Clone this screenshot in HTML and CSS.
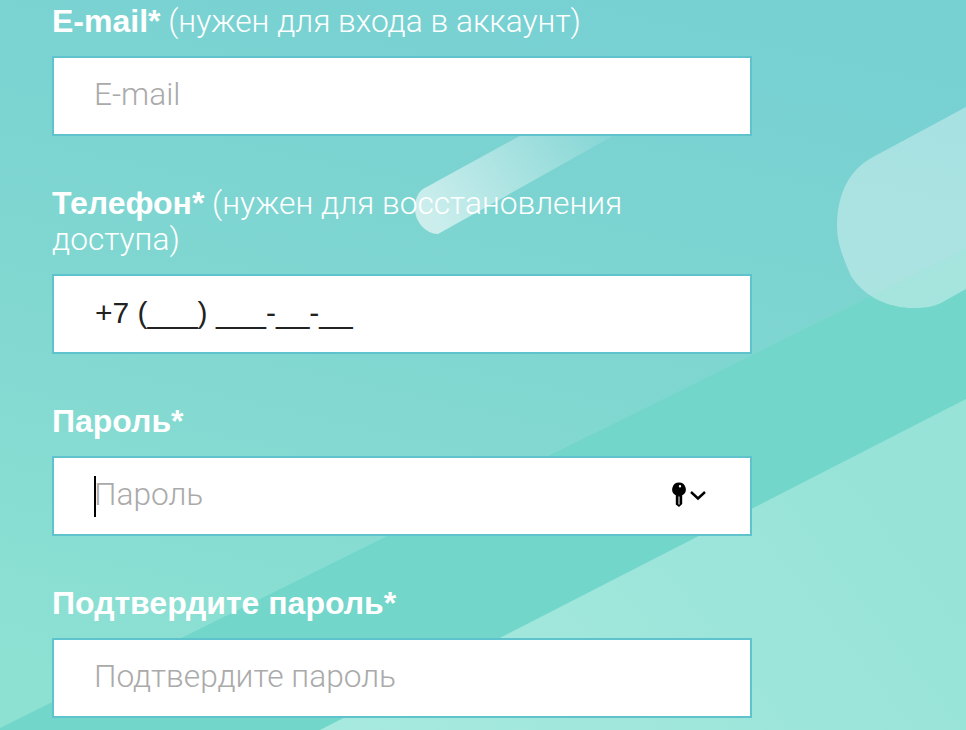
FILE: index.html
```html
<!DOCTYPE html>
<html lang="ru">
<head>
  <meta charset="UTF-8">
  <meta name="viewport" content="width=device-width, initial-scale=1.0">
  <title>Регистрация</title>
  <link rel="stylesheet" href="styles.css">
</head>
<body>
  <svg class="backdrop" width="966" height="730" viewBox="0 0 966 730" aria-hidden="true">
    <defs>
      <linearGradient id="base" x1="0.65" y1="0" x2="0.35" y2="1">
        <stop offset="0" stop-color="#77d0d2"/>
        <stop offset="0.5" stop-color="#80d7d1"/>
        <stop offset="1" stop-color="#8de1d3"/>
      </linearGradient>
      <linearGradient id="lower" x1="0" y1="1" x2="1" y2="0.6">
        <stop offset="0" stop-color="#a7e9de"/>
        <stop offset="1" stop-color="#97e3d8"/>
      </linearGradient>
      <linearGradient id="streak" x1="0" y1="0.6" x2="1" y2="0.3">
        <stop offset="0" stop-color="#fff" stop-opacity="0.6"/>
        <stop offset="1" stop-color="#fff" stop-opacity="0.1"/>
      </linearGradient>
    </defs>
    <rect width="966" height="730" fill="url(#base)"/>
    <polygon points="966,249 966,730 0,730 0,728" fill="#72d6ca"/>
    <polygon points="966,399 966,730 320,730" fill="url(#lower)"/>
    <path d="M966 107 L873 157 C845 172 837 200 837 227 C837 245 845 262 851 276 C865 298 890 308 913 308 C925 308 933 307 941 303 L966 289 Z" fill="#fff" fill-opacity="0.36"/>
    <path d="M620 132 L527 132 L423 189 C417 193 415 201 415 209 C415 222 426 234 438 234 Z" fill="url(#streak)"/>
  </svg>

  <form class="signup-form">
    <div class="field-group">
      <label class="field-label" for="email"><b>E-mail*</b> (нужен для входа в аккаунт)</label>
      <div class="field-box">
        <input class="field-input" id="email" type="text" placeholder="E-mail">
      </div>
    </div>

    <div class="field-group">
      <label class="field-label" for="phone"><b>Телефон*</b> (нужен для восстановления доступа)</label>
      <div class="field-box">
        <input class="field-input field-input-mask" id="phone" type="text" value="+7 (___) ___-__-__">
      </div>
    </div>

    <div class="field-group">
      <label class="field-label" for="password"><b>Пароль*</b></label>
      <div class="field-box">
        <span class="caret"></span>
        <input class="field-input" id="password" type="text" placeholder="Пароль">
        <span class="key-menu">
          <svg width="34" height="26" viewBox="0 0 34 26">
            <path fill-rule="evenodd" fill="#000" d="M7 0.5a6.8 6.8 0 0 1 3.2 12.8V22l-3.2 3-3.2-2.5V13.3A6.8 6.8 0 0 1 7 0.5Zm1 2.5a1.2 1.2 0 1 0 0 2.4 1.2 1.2 0 0 0 0-2.4ZM6.5 14.5v8h1v-8Z"/>
            <path fill="none" stroke="#000" stroke-width="2.4" d="M19 10l7 6.5 7-6.5"/>
          </svg>
        </span>
      </div>
    </div>

    <div class="field-group">
      <label class="field-label" for="confirm"><b>Подтвердите пароль*</b></label>
      <div class="field-box">
        <input class="field-input" id="confirm" type="text" placeholder="Подтвердите пароль">
      </div>
    </div>
  </form>
</body>
</html>
```

FILE: styles.css
```css
html, body {
  margin: 0;
  height: 730px;
  overflow: hidden;
}

body {
  position: relative;
  font-family: "Liberation Sans", Arial, sans-serif;
  background-color: #7fd6d1;
}

.backdrop {
  position: absolute;
  top: 0;
  left: 0;
  display: block;
}

.signup-form {
  position: relative;
  display: flex;
  flex-direction: column;
  gap: 49px;
  width: 700px;
  padding: 3px 0 0 52px;
}

.field-label {
  display: block;
  width: 600px;
  padding-top: 1px;
  margin-bottom: 16px;
  font-family: Roboto, "Liberation Sans", sans-serif;
  font-size: 31.7px;
  font-weight: 300;
  line-height: 36px;
  color: #fff;
}

.field-label b {
  font-family: "Liberation Sans", Arial, sans-serif;
  font-size: 32px;
  font-weight: 700;
  line-height: 30px;
}

.field-box {
  position: relative;
  box-sizing: border-box;
  display: flex;
  align-items: center;
  height: 80px;
  border: 2px solid #5fc3cd;
  background: #fff;
}

.field-input {
  flex: 1;
  min-width: 0;
  height: 100%;
  padding: 0 40px 3px 40px;
  box-sizing: border-box;
  border: none;
  outline: none;
  background: transparent;
  font-family: Roboto, "Liberation Sans", sans-serif;
  font-size: 31.7px;
  font-weight: 300;
  color: #111;
}

.field-input::placeholder {
  color: #aaa;
  opacity: 1;
}

.field-input-mask {
  padding-left: 41px;
  font-family: "Liberation Sans", Arial, sans-serif;
  font-size: 30px;
  font-weight: 400;
  color: #222;
}

.caret {
  position: absolute;
  top: 18px;
  left: 40px;
  width: 2px;
  height: 41px;
  background: #000;
}

.key-menu {
  position: absolute;
  top: 24px;
  left: 618px;
  display: block;
  line-height: 0;
}
```
